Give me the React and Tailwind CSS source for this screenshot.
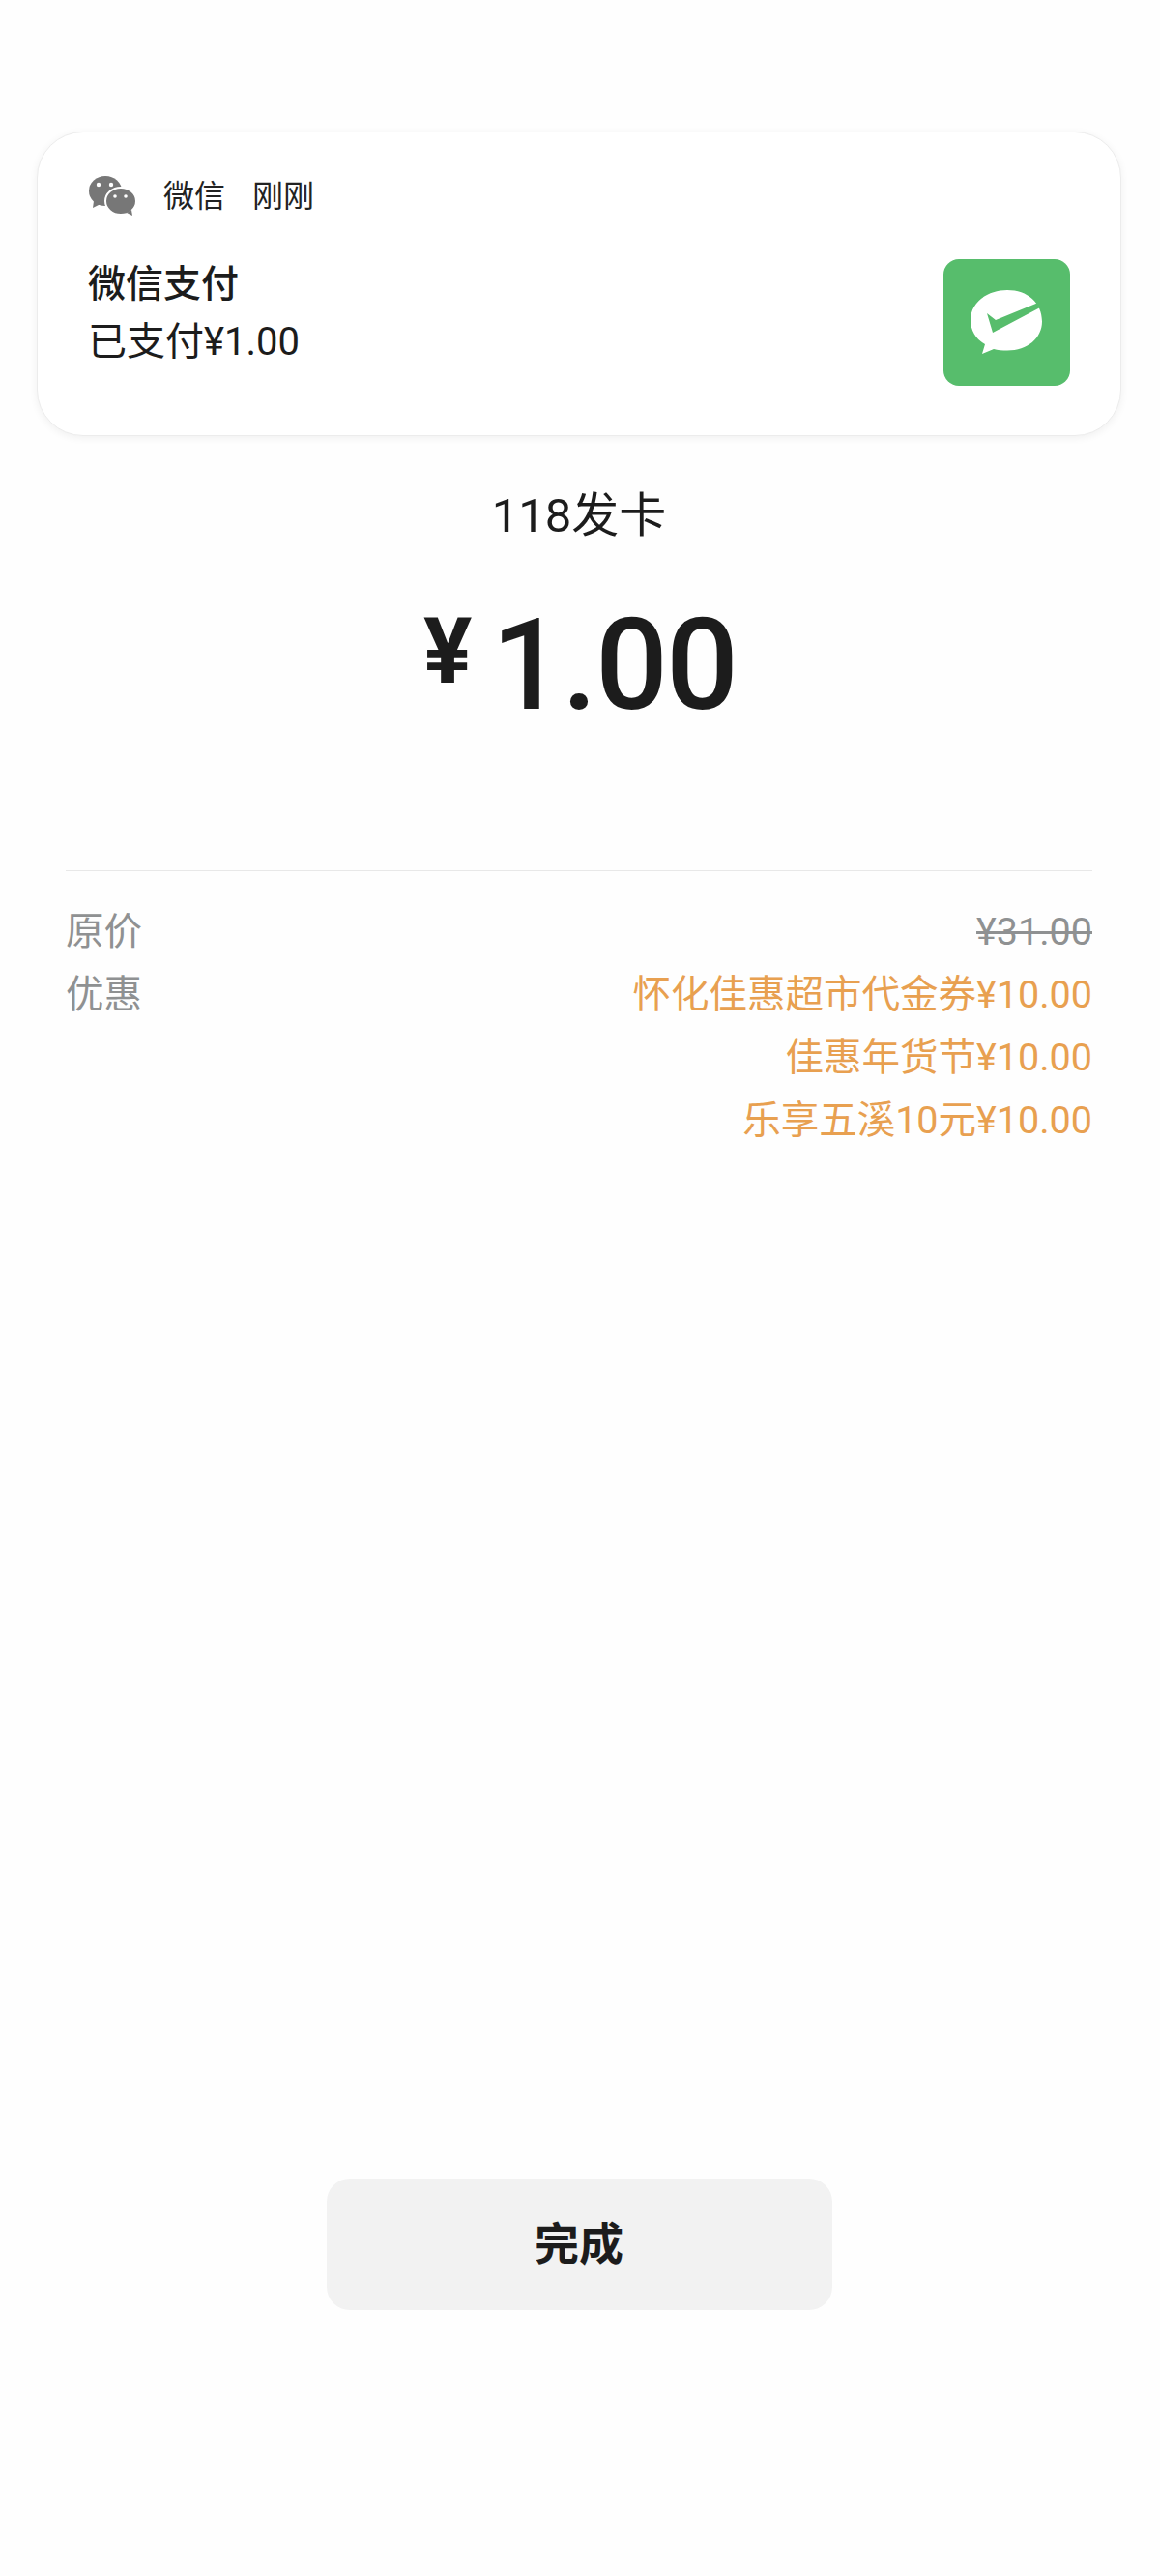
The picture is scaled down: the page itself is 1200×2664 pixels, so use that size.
import React from "react";

const FONT = "font-['Roboto','Noto_Sans_CJK_SC',sans-serif]";

// grey double-bubble logo in the notification header
function WeChatLogo() {
  return (
    <svg width="50" height="42" viewBox="0 0 50 42" className="block ml-[1px]">
      <ellipse cx="17" cy="15.500" rx="17" ry="15.500" fill="#777" />
      <path d="M5 26l-1 7 8-4z" fill="#777" />
      <ellipse cx="33" cy="26" rx="16" ry="14" fill="#777" stroke="#fff" strokeWidth="2" />
      <path d="M39 38l6 3-1-6z" fill="#777" />
      <circle cx="10" cy="9" r="2.200" fill="#fff" />
      <circle cx="23" cy="9" r="2.200" fill="#fff" />
      <circle cx="27" cy="21" r="1.800" fill="#fff" />
      <circle cx="38" cy="21" r="1.800" fill="#fff" />
    </svg>
  );
}

// green WeChat Pay tile
function PayLogo() {
  return (
    <div className="w-[131px] h-[131px] mt-[4px] rounded-[16px] bg-[#57bd6c] flex items-center justify-center shrink-0">
      <svg width="76" height="68" viewBox="0 0 76 68" className="block">
        <path d="M38 0C17 0 0 13 0 31c0 11 6 20 15 25l-3 10 12-5c4 1 9 1.500 14 1.500 21 0 36-13 36-30C74 13 59 0 38 0z" fill="#fff" />
        <path d="M17 24l6 20L72 18l-2-5-44 18z" fill="#57bd6c" />
      </svg>
    </div>
  );
}

function Row({ label, children }) {
  return (
    <div className="flex justify-between items-start">
      <span className="text-[#8f9192]">{label}</span>
      <div className="flex flex-col items-end">{children}</div>
    </div>
  );
}

export default function App() {
  const discounts = ["怀化佳惠超市代金券¥10.00", "佳惠年货节¥10.00", "乐享五溪10元¥10.00"];

  return (
    <div className={`w-[1200px] h-[2664px] bg-[#fefefe] flex flex-col items-center pt-[136px] pr-[2px] ${FONT}`}>
      <div className="w-[1122px] h-[315px] bg-white rounded-[48px] border border-[#ececec] shadow-[0_2px_8px_rgba(0,0,0,0.06)] pl-[52px] pr-[52px] pt-[41px]">
        <div className="flex items-center h-[50px] text-[32px] leading-[50px] text-[#222]">
          <WeChatLogo />
          <span className="ml-[27px]">微信</span>
          <span className="ml-[28px]">刚刚</span>
        </div>
        <div className="flex justify-between items-start mt-[36px]">
          <div className="text-[39px] leading-[60px] text-[#1c1c1c]">
            <div className="font-medium">微信支付</div>
            <div className="text-[40px]">已支付¥1.00</div>
          </div>
          <PayLogo />
        </div>
      </div>

      <div className="mt-[53px] text-[49px] leading-[60px] text-[#1c1c1c]">118发卡</div>

      <div className="mt-[54px] flex items-start h-[140px] text-[#1c1c1c] font-medium pl-[2px]">
        <span className="text-[94px] leading-[112px] mr-[20px] font-bold">¥</span>
        <span className="text-[132px] leading-[140px] tracking-[-2px]">1.00</span>
      </div>

      <div className="mt-[142px] w-[1062px] border-t border-[#e8e8e8] pt-[30px] text-[39.500px] leading-[65px]">
        <Row label="原价">
          <span className="text-[#8f9192] line-through">¥31.00</span>
        </Row>
        <Row label="优惠">
          {discounts.map((d) => (
            <span key={d} className="text-[#e8a050]">{d}</span>
          ))}
        </Row>
      </div>

      <button className="mt-auto mb-[275px] w-[523px] h-[136px] rounded-[24px] bg-[#f2f2f2] text-[46px] font-bold text-[#1c1c1c]">
        完成
      </button>
    </div>
  );
}
